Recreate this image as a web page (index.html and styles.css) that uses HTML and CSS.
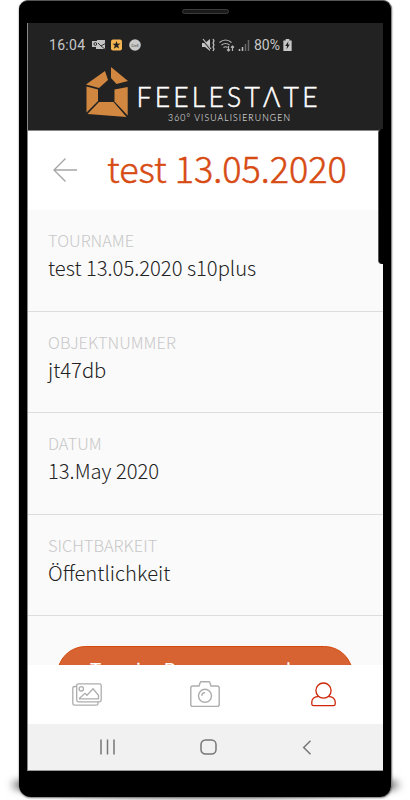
FILE: index.html
```html
<!DOCTYPE html>
<html lang="de">
<head>
<meta charset="utf-8">
<title>Feelestate</title>
<link rel="stylesheet" href="styles.css">
</head>
<body>
<div class="phone">
  <div class="speaker"></div>
  <div class="side-edge"></div>
  <div class="screen">
    <header class="brand">
      <div class="status">
        <span class="clock">16:04</span>
        <svg class="notifications" width="52" height="14" viewBox="0 0 52 14">
          <path d="M5 2h8v9H4V9H0V3h5z" fill="#c3c3c3"/>
          <path d="M6 5l3 3 5-3M9 8l5 4" fill="none" stroke="#353535"/>
          <circle cx="3.300" cy="6" r="1.400" fill="none" stroke="#333"/>
          <rect x="19" y="1.500" width="11" height="11" rx="2" fill="#f3b552"/>
          <path d="M24.500 3l1 2.800 3-.2-2.400 2 1 3-2.600-1.700-2.700 1.800 1-3.100-2.400-1.900 3 .1z" fill="#222"/>
          <circle cx="43" cy="7" r="5.800" fill="#c9c9c9"/>
          <text x="43" y="8.500" class="badge-text">Dell</text>
        </svg>
        <svg class="signals" width="49" height="14" viewBox="0 0 49 14">
          <path d="M0 5h3l5-4v12L3 9H0z" fill="#c5c5c5"/>
          <path d="M0 1l10 12" stroke="#222" stroke-width="1.500"/>
          <path d="M1 1l8 10M11 1l1 2-1 2 1 2-1 2 1 2-1 2" fill="none" stroke="#c5c5c5" stroke-width="1.200"/>
          <g fill="none" stroke="#b5b5b5" stroke-width="1.200"><path d="M17.500 4.500q6-5 12 0M19.500 7q4-3 8 0M21.500 9.500q2-1.500 4 0M26.500 8v5M25 11.500l1.500 1.500 1.500-1.500M30.500 13V8M29 9.500L30.500 8 32 9.500"/></g>
          <path d="M37.500 13v-2M40.500 13V9" stroke="#bbb" stroke-width="1.500"/>
          <path d="M43.500 13V6M46.500 13V2" stroke="#686868" stroke-width="1.500"/>
        </svg>
        <span class="percent">80%</span>
        <svg class="battery" width="9" height="12" viewBox="0 0 9 13"><path d="M2.500 0h4v1.500H9V13H0V1.500h2.500z" fill="#c7c7c7"/><path d="M5.500 2.500L2 7.500h2L3.500 11 7 6H5z" fill="#222"/></svg>
      </div>
      <svg class="logo" width="236" height="60" viewBox="84 65 236 60">
        <g fill="#d28740">
          <path d="M86 84.500L105 71l3 9-9 8z"/>
          <path d="M111 67l17 14-11.500 3-5.500-6z"/>
          <path d="M86.500 86.500L98 89.500V101L86.500 112.500z"/>
          <path d="M127.700 87v28.500L114.500 101.500V89.500z"/>
          <path d="M99 102h14.500l13 15L87.500 114z"/>
        </g>
        <text class="wordmark" x="136.500" y="107" textLength="181" lengthAdjust="spacing">FEELESTΛTE</text>
        <text class="tagline" x="168" y="121.300" textLength="122" lengthAdjust="spacing">360° VISUALISIERUNGEN</text>
      </svg>
    </header>
    <div class="titlebar">
      <svg class="back" width="24" height="24" viewBox="0 0 24 24"><path d="M12.500 .5L1 12l11.500 11.500M1 12h23" fill="none" stroke="#a6a6a6" stroke-width="1.400"/></svg>
      <h1>test 13.05.2020</h1>
    </div>
    <main class="fields">
      <section><label>TOURNAME</label><p>test 13.05.2020 s10plus</p></section>
      <section><label>OBJEKTNUMMER</label><p>jt47db</p></section>
      <section><label>DATUM</label><p>13.May 2020</p></section>
      <section><label>SICHTBARKEIT</label><p>Öffentlichkeit</p></section>
      <div class="action"><button>Tour im Browser ansehen</button></div>
    </main>
    <nav class="tabs">
      <svg width="30" height="24" viewBox="0 0 30 24" fill="none" stroke="#adadad" stroke-width="1.300"><rect x="4.700" y=".8" width="24.500" height="18" rx="1.800"/><path d="M4.700 3.500H2.500Q.8 3.500.8 5.200v15.300q0 1.700 1.700 1.700h21.800q1.700 0 1.700-1.700v-1.700M7.500 15.800h19v-3.500l-5.500-6.500-6 6.500-2-2-5.500 5z"/><circle cx="9.300" cy="5.800" r="2.200"/></svg>
      <svg width="30" height="27" viewBox="0 0 30 27" fill="none" stroke="#adadad" stroke-width="1.400"><path d="M2.700 5H9l1.200-3.500q.2-.7 1-.7h7.600q.8 0 1 .7L21 5h6.300q1.900 0 1.900 1.900v16.600q0 1.900-1.900 1.900H2.700Q.8 25.400.8 23.500V6.900Q.8 5 2.700 5z"/><circle cx="15" cy="14.800" r="6.500"/><path d="M11.800 14.800q0-3 3.200-3.200"/></svg>
      <svg width="25" height="25" viewBox="0 0 25 25" fill="none" stroke="#cf2508" stroke-width="1.300"><circle cx="12.500" cy="8.600" r="7.600"/><path d="M7.500 14.700C3.500 14.700.8 16.500.8 20v2q0 1.700 1.700 1.700h20q1.700 0 1.700-1.700v-2c0-3.500-2.700-5.300-6.700-5.300"/></svg>
    </nav>
    <div class="system">
      <svg width="15" height="16" viewBox="0 0 15 16" fill="none" stroke="#777" stroke-width="1.500"><path d="M1 .5v15M7.500.5v15M14 .5v15"/></svg>
      <svg width="17" height="16" viewBox="0 0 17 16" fill="none" stroke="#777" stroke-width="1.500"><rect x="1" y="1" width="15" height="14" rx="4.500"/></svg>
      <svg width="11" height="15" viewBox="0 0 11 15" fill="none" stroke="#777" stroke-width="1.500"><path d="M9.500 .7L2.700 7.500 9.500 14.300"/></svg>
    </div>
  </div>
</div>
</body>
</html>
```
FILE: styles.css
```css
* { box-sizing: border-box; }
body { margin: 0; width: 410px; height: 800px; overflow: hidden; background: #fff; font-family: "Noto Sans CJK SC", "Noto Sans", sans-serif; font-weight: 300; }
.phone { position: relative; width: 373px; height: 797px; margin-left: 19px; padding: 22px 8px 26px; background: #000; border-radius: 9px 9px 12px 12px; border-top: 1px solid #555; border-right: 1px solid #888; box-shadow: 0 1px 2px #777; }
.phone::before { content: ""; position: absolute; z-index: -1; left: -7px; right: -8px; bottom: 1px; height: 22px; background: #333; border-radius: 50%; filter: blur(4px); }
.speaker { position: absolute; left: 163px; top: 8px; width: 47px; height: 5px; border: 1px solid #3b3b3b; border-radius: 3px; background: #1b1b1b; }
.side-edge { position: absolute; z-index: 2; right: 0; top: 128px; width: 13px; height: 135px; background: #000; border-left: 1px solid #555; border-radius: 4px 0 0 4px; }
.screen { height: 748px; display: flex; flex-direction: column; background: #fafafa; border-left: 1px solid #888; }
.brand { height: 108px; flex: none; background: #222; border-bottom: 1px solid #888; padding: 13px 0 0; }
.status { display: flex; align-items: center; height: 18px; padding-left: 21px; color: #c8c8c8; font: 400 14px/18px Roboto, sans-serif; }
.clock { width: 43px; letter-spacing: .3px; }
.signals { margin-left: 58px; }
.percent { margin-left: 3px; width: 29px; }
.badge-text { font: 4px "Liberation Sans", sans-serif; fill: #444; text-anchor: middle; }
.logo { display: block; margin: 11px 0 0 56px; }
.wordmark { font: 300 26.500px Lato, sans-serif; fill: #fff; stroke: #fff; stroke-width: .5px; }
.tagline { font: 300 8.700px Lato, sans-serif; fill: #fff; }
.titlebar { height: 79px; flex: none; display: flex; align-items: center; padding: 0 0 1px 25px; background: #fff; color: #d74b13; }
.back { flex: none; }
h1 { margin: -6px 0 0 30px; font-size: 36px; line-height: 50px; font-weight: 300; white-space: nowrap; -webkit-text-stroke: .5px #d74b13; }
.fields { flex: 1; min-height: 0; overflow: hidden; }
section { height: 101.600px; border-bottom: 1px solid #ddd; padding: 18.300px 20px 0; }
label { display: block; font-size: 16.400px; line-height: 24px; color: #c8c8c8; }
p { margin: 2px 0 0; font-size: 20.200px; line-height: 28px; color: #222; }
.action { padding: 30px 30px 0 29px; }
button { display: block; width: 100%; height: 57px; padding: 0 0 9px; border: 1px solid #d54a0a; border-radius: 29px; background: #d76232; color: #fff; font: 400 19.500px/30px "Noto Sans CJK SC", sans-serif; white-space: nowrap; }
.tabs { height: 59px; flex: none; background: #fff; display: grid; grid-template-columns: repeat(3, 1fr); align-items: center; justify-items: center; }
.system { height: 47px; flex: none; background: #f1f1f1; border-bottom: 1px solid #999; display: flex; align-items: center; justify-content: space-between; padding: 0 71px 0 72px; }
```
